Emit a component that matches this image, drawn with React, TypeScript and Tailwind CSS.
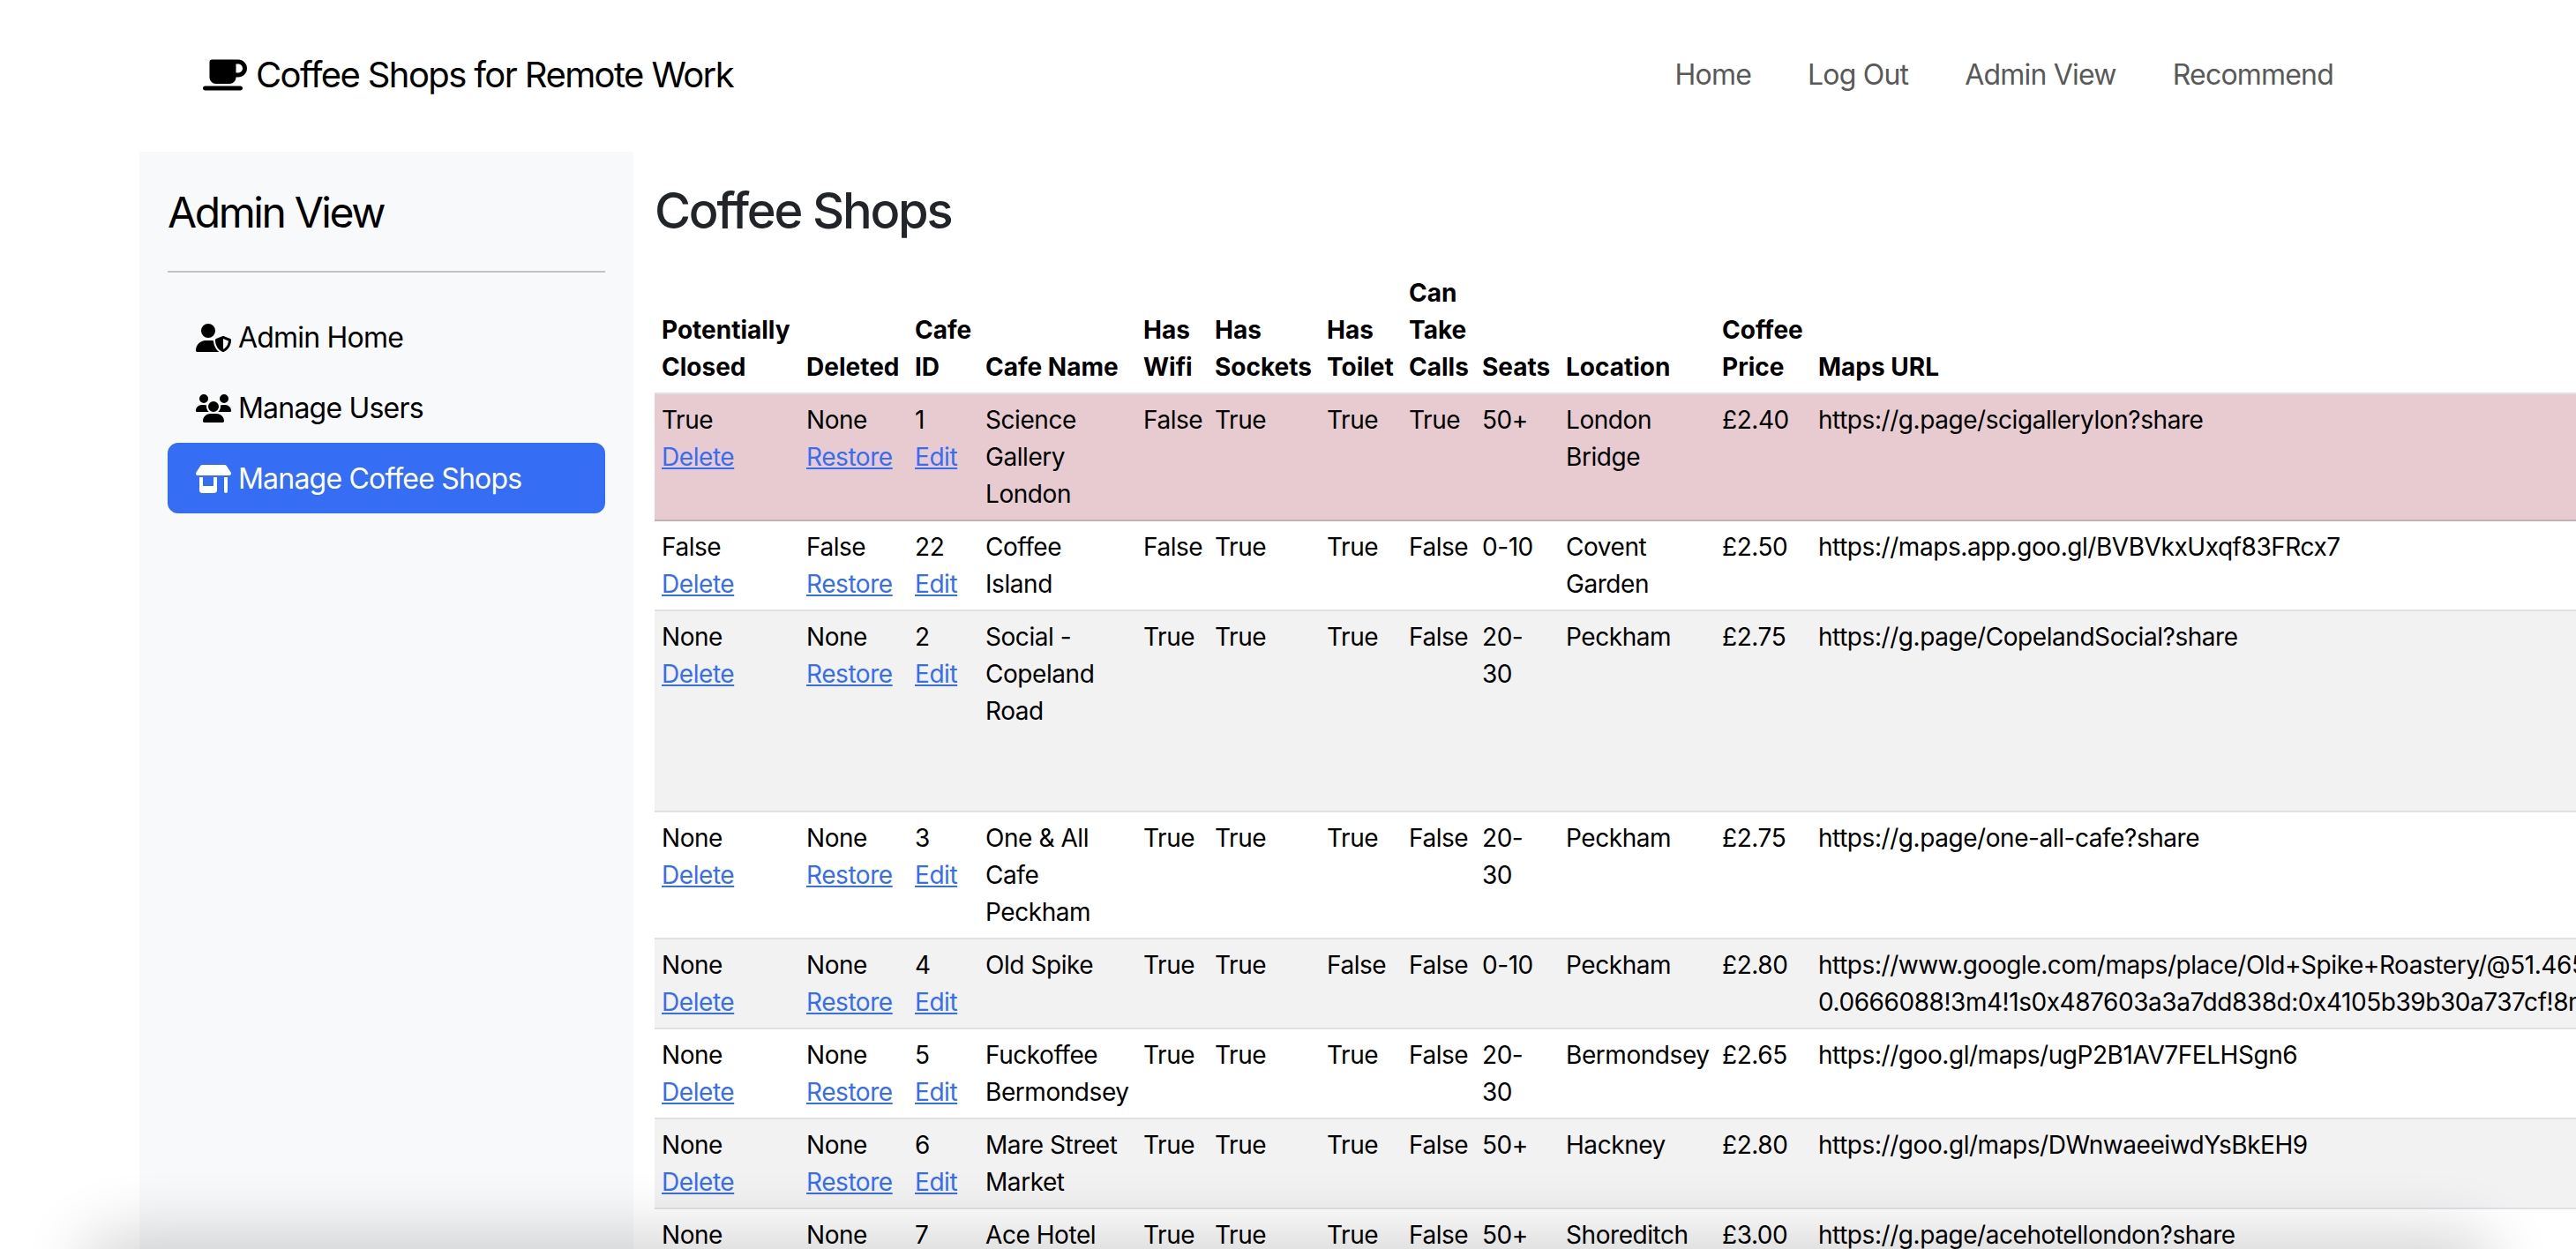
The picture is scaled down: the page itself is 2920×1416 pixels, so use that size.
import { FaMugSaucer, FaShop, FaUserShield, FaUsers } from "react-icons/fa6";

const colWidths = ["w-[164px]", "w-[123px]", "w-[80px]", "w-[179px]", "w-[81px]", "w-[127px]", "w-[93px]", "w-[83px]", "w-[95px]", "w-[177px]", "w-[109px]", "w-[1400px]"];

const headers = ["Potentially Closed", "Deleted", "Cafe ID", "Cafe Name", "Has Wifi", "Has Sockets", "Has Toilet", "Can Take Calls", "Seats", "Location", "Coffee Price", "Maps URL"];

const longUrl = ["https://www.google.com/maps/place/Old+Spike+Roastery/@51.4656,-", "0.0666088!3m4!1s0x487603a3a7dd838d:0x4105b39b30a737cf!8m2!3d51.4656!4d-0.0666"];

type Shop = {
  closed: string;
  deleted: string;
  id: string;
  name: string;
  wifi: string;
  sockets: string;
  toilet: string;
  calls: string;
  seats: string;
  location: string;
  price: string;
  url: string | string[];
  rowClass: string;
};

const shops: Shop[] = [
  { closed: "True", deleted: "None", id: "1", name: "Science Gallery London", wifi: "False", sockets: "True", toilet: "True", calls: "True", seats: "50+", location: "London Bridge", price: "£2.40", url: "https://g.page/scigallerylon?share", rowClass: "bg-[#e7cbd0] border-[#c4b0b4]" },
  { closed: "False", deleted: "False", id: "22", name: "Coffee Island", wifi: "False", sockets: "True", toilet: "True", calls: "False", seats: "0-10", location: "Covent Garden", price: "£2.50", url: "https://maps.app.goo.gl/BVBVkxUxqf83FRcx7", rowClass: "bg-white border-[#dee2e6]" },
  { closed: "None", deleted: "None", id: "2", name: "Social - Copeland Road", wifi: "True", sockets: "True", toilet: "True", calls: "False", seats: "20-30", location: "Peckham", price: "£2.75", url: "https://g.page/CopelandSocial?share", rowClass: "bg-[#f2f2f2] border-[#dee2e6] h-[228px]" },
  { closed: "None", deleted: "None", id: "3", name: "One & All Cafe Peckham", wifi: "True", sockets: "True", toilet: "True", calls: "False", seats: "20-30", location: "Peckham", price: "£2.75", url: "https://g.page/one-all-cafe?share", rowClass: "bg-white border-[#dee2e6]" },
  { closed: "None", deleted: "None", id: "4", name: "Old Spike", wifi: "True", sockets: "True", toilet: "False", calls: "False", seats: "0-10", location: "Peckham", price: "£2.80", url: longUrl, rowClass: "bg-[#f2f2f2] border-[#dee2e6]" },
  { closed: "None", deleted: "None", id: "5", name: "Fuckoffee Bermondsey", wifi: "True", sockets: "True", toilet: "True", calls: "False", seats: "20-30", location: "Bermondsey", price: "£2.65", url: "https://goo.gl/maps/ugP2B1AV7FELHSgn6", rowClass: "bg-white border-[#dee2e6]" },
  { closed: "None", deleted: "None", id: "6", name: "Mare Street Market", wifi: "True", sockets: "True", toilet: "True", calls: "False", seats: "50+", location: "Hackney", price: "£2.80", url: "https://goo.gl/maps/DWnwaeeiwdYsBkEH9", rowClass: "bg-[#f2f2f2] border-[#dee2e6]" },
  { closed: "None", deleted: "None", id: "7", name: "Ace Hotel Shoreditch", wifi: "True", sockets: "True", toilet: "True", calls: "False", seats: "50+", location: "Shoreditch", price: "£3.00", url: "https://g.page/acehotellondon?share", rowClass: "bg-white border-[#dee2e6]" },
];

const navLinks = ["Home", "Log Out", "Admin View", "Recommend"];

function ActionCell({ value, action }: { value: string; action: string }) {
  return (
    <td className="px-2 py-2 align-top">
      {value}
      <br />
      <a href="#" className="text-[#356df5] underline">{action}</a>
    </td>
  );
}

function Cell({ children }: { children: React.ReactNode }) {
  return <td className="px-2 py-2 align-top">{children}</td>;
}

export default function App() {
  return (
    <div className="relative h-[1416px] w-[2920px] overflow-hidden bg-white font-['Inter',sans-serif] text-black">
      <nav className="flex h-[172px] items-center justify-between pb-[2px] pl-[230px] pr-[243px]">
        <a href="#" className="flex items-center gap-[10px] text-[40px] leading-[60px] tracking-[-1.6px] text-black">
          <FaMugSaucer className="h-[40px] w-[50px]" />
          Coffee Shops for Remote Work
        </a>
        <ul className="flex text-[32px] leading-[48px] tracking-[-0.8px] text-[#595959]">
          {navLinks.map((link) => (
            <li key={link}>
              <a href="#" className="block px-[32px]">{link}</a>
            </li>
          ))}
        </ul>
      </nav>

      <div className="ml-[158px] flex h-[1244px]">
        <aside className="w-[560px] shrink-0 bg-[#f8f9fa] px-[32px] pt-[33px]">
          <div className="text-[48px] leading-[72px] tracking-[-2.4px]">Admin View</div>
          <hr className="mt-[30px] border-t-2 border-[#c2c3c4]" />
          <ul className="mt-[33px] text-[32px] leading-[48px] tracking-[-0.8px]">
            <li>
              <a href="#" className="flex items-center gap-[8px] rounded-[12px] px-[32px] pb-[15px] pt-[17px]">
                <FaUserShield className="h-[32px] w-[40px]" />
                Admin Home
              </a>
            </li>
            <li>
              <a href="#" className="flex items-center gap-[8px] rounded-[12px] px-[32px] pb-[15px] pt-[17px]">
                <FaUsers className="h-[32px] w-[40px]" />
                Manage Users
              </a>
            </li>
            <li>
              <a href="#" className="flex items-center gap-[8px] rounded-[12px] bg-[#356df5] px-[32px] pb-[15px] pt-[17px] text-white">
                <FaShop className="h-[32px] w-[40px]" />
                Manage Coffee Shops
              </a>
            </li>
          </ul>
        </aside>

        <main className="min-w-0 flex-1 pl-[24px]">
          <h2 className="mt-[33px] text-[56px] font-medium leading-[68px] tracking-[-2.2px] text-[#212529]">Coffee Shops</h2>
          <table className="mt-[30px] w-[2711px] table-fixed border-collapse text-[28px] leading-[42px] tracking-[-0.44px]">
            <colgroup>
              {colWidths.map((w, i) => (
                <col key={i} className={w} />
              ))}
            </colgroup>
            <thead>
              <tr className="border-b-2 border-[#dee2e6]">
                {headers.map((h) => (
                  <th key={h} className="px-2 py-2 text-left align-bottom font-bold tracking-normal">{h}</th>
                ))}
              </tr>
            </thead>
            <tbody>
              {shops.map((s) => (
                <tr key={s.id} className={`border-b-2 ${s.rowClass}`}>
                  <ActionCell value={s.closed} action="Delete" />
                  <ActionCell value={s.deleted} action="Restore" />
                  <ActionCell value={s.id} action="Edit" />
                  <Cell>{s.name}</Cell>
                  <Cell>{s.wifi}</Cell>
                  <Cell>{s.sockets}</Cell>
                  <Cell>{s.toilet}</Cell>
                  <Cell>{s.calls}</Cell>
                  <Cell>{s.seats}</Cell>
                  <Cell>{s.location}</Cell>
                  <Cell>{s.price}</Cell>
                  <td className="px-2 py-2 align-top">
                    {Array.isArray(s.url) ? s.url.map((line) => <div key={line}>{line}</div>) : s.url}
                  </td>
                </tr>
              ))}
            </tbody>
          </table>
        </main>
      </div>

      {/* window drop shadow creeping in along the bottom of the capture */}
      <div className="pointer-events-none absolute left-[120px] right-[120px] top-[1426px] h-[40px] rounded-[30px] shadow-[0_0_70px_30px_rgba(0,0,0,0.16)]" />
    </div>
  );
}
